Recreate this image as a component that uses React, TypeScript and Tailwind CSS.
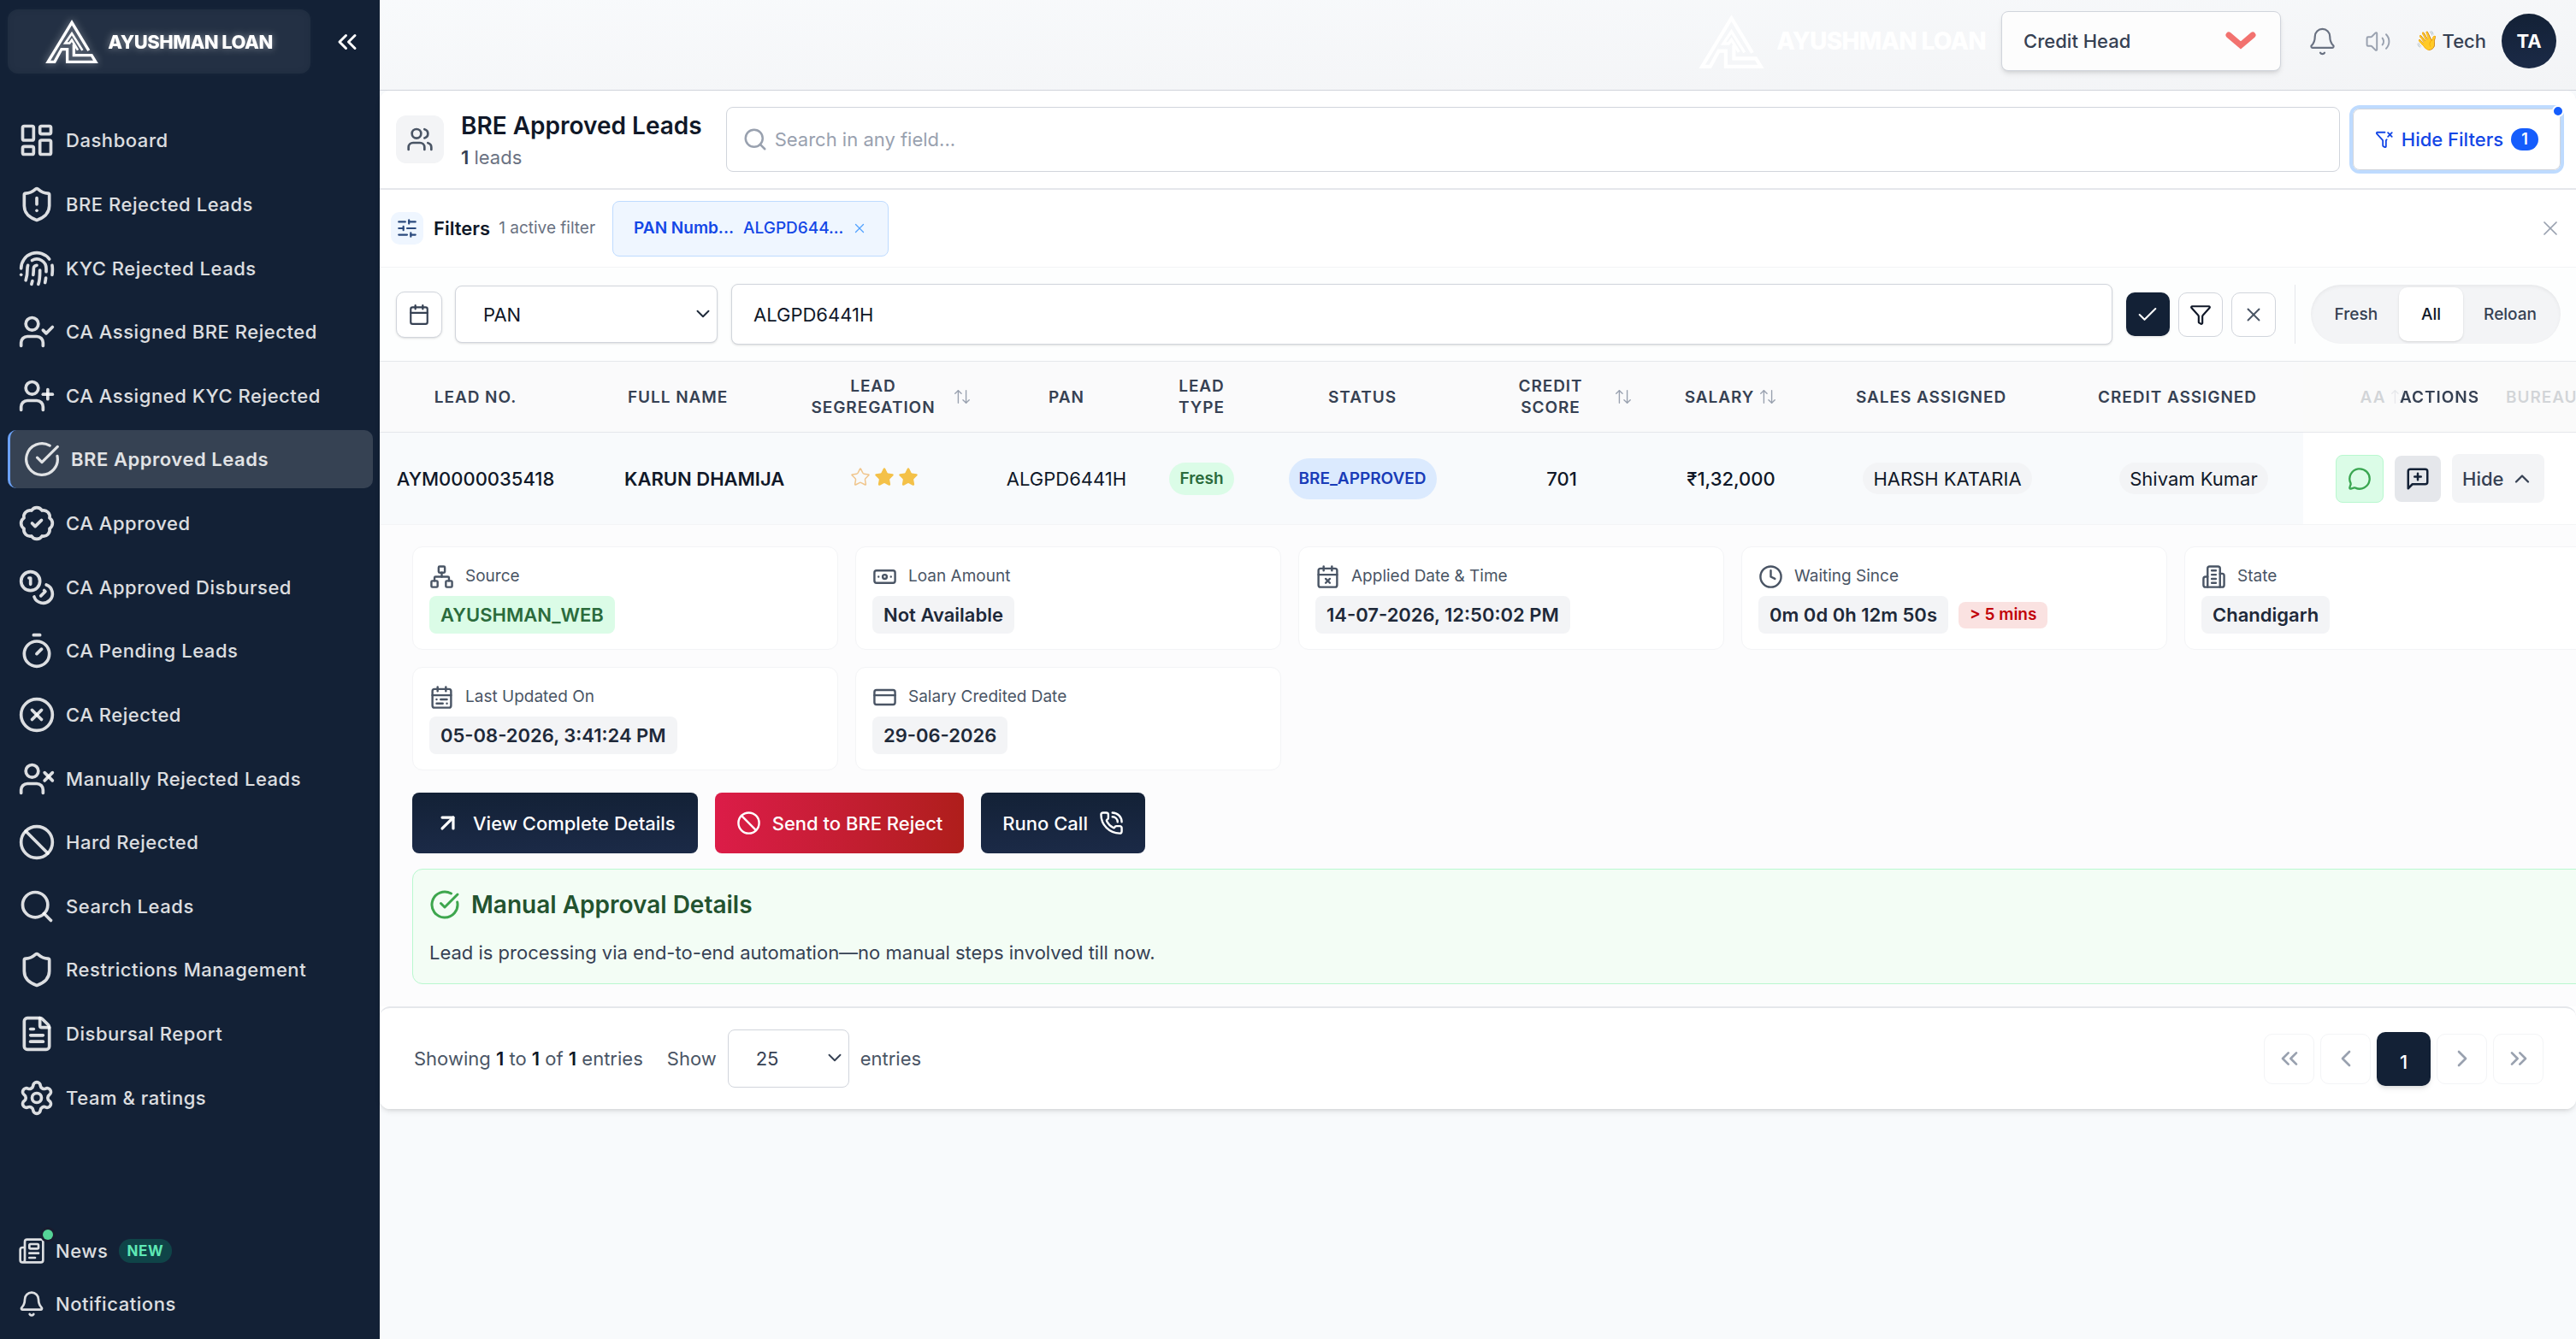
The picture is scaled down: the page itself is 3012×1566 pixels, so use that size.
import type { ComponentType, ReactNode } from "react";
import {
  ArrowUpDown,
  ArrowUpRight,
  BadgeCheck,
  Ban,
  Banknote,
  Bell,
  Calendar,
  CalendarRange,
  CalendarX,
  Check,
  ChevronDown,
  ChevronLeft,
  ChevronRight,
  ChevronUp,
  ChevronsLeft,
  ChevronsRight,
  CircleCheckBig,
  CircleX,
  Clock,
  Coins,
  CreditCard,
  FileText,
  Fingerprint,
  Funnel,
  FunnelX,
  LayoutDashboard,
  MessageCircle,
  Network,
  Newspaper,
  PhoneCall,
  Search,
  Settings,
  Shield,
  ShieldAlert,
  SlidersHorizontal,
  Star,
  Timer,
  UserCheck,
  UserPlus,
  UserX,
  Users,
  Volume2,
  X,
} from "lucide-react";

type IconProps = { size?: number; strokeWidth?: number; className?: string };
type IconType = ComponentType<IconProps>;

const NAV_ITEMS: { label: string; icon: IconType; active?: boolean }[] = [
  { label: "Dashboard", icon: LayoutDashboard },
  { label: "BRE Rejected Leads", icon: ShieldAlert },
  { label: "KYC Rejected Leads", icon: Fingerprint },
  { label: "CA Assigned BRE Rejected", icon: UserCheck },
  { label: "CA Assigned KYC Rejected", icon: UserPlus },
  { label: "BRE Approved Leads", icon: CircleCheckBig, active: true },
  { label: "CA Approved", icon: BadgeCheck },
  { label: "CA Approved Disbursed", icon: Coins },
  { label: "CA Pending Leads", icon: Timer },
  { label: "CA Rejected", icon: CircleX },
  { label: "Manually Rejected Leads", icon: UserX },
  { label: "Hard Rejected", icon: Ban },
  { label: "Search Leads", icon: Search },
  { label: "Restrictions Management", icon: Shield },
  { label: "Disbursal Report", icon: FileText },
  { label: "Team & ratings", icon: Settings },
];

function LogoMark({ className }: { className?: string }) {
  return (
    <svg viewBox="0 0 184 152" className={className} fill="none" stroke="currentColor" strokeWidth="10" aria-hidden>
      <path d="M151 108 92 10 9 147H32L56 103H76V147H175L161 124H99V86" />
      <path d="M129 107 92 48 69 82H84L92 71 113 106" strokeWidth="8" />
    </svg>
  );
}

function BuildingIcon({ size = 24, strokeWidth = 2 }: IconProps) {
  return (
    <svg
      viewBox="0 0 24 24"
      width={size}
      height={size}
      fill="none"
      stroke="currentColor"
      strokeWidth={strokeWidth}
      strokeLinecap="round"
      strokeLinejoin="round"
      aria-hidden
    >
      <path d="M6 22V4a2 2 0 0 1 2-2h8a2 2 0 0 1 2 2v18Z" />
      <path d="M6 12H4a2 2 0 0 0-2 2v6a2 2 0 0 0 2 2h2" />
      <path d="M18 9h2a2 2 0 0 1 2 2v9a2 2 0 0 1-2 2h-2" />
      <path d="M10 6h4M10 10h4M10 14h4M10 18h4" />
    </svg>
  );
}

function RemarkIcon() {
  return (
    <svg
      viewBox="0 0 24 24"
      width={30}
      height={30}
      fill="none"
      stroke="currentColor"
      strokeWidth={2}
      strokeLinecap="round"
      strokeLinejoin="round"
      aria-hidden
    >
      <path d="M21 15a2 2 0 0 1-2 2H7l-4 4V5a2 2 0 0 1 2-2h14a2 2 0 0 1 2 2z" />
      <path d="M12 7v6M9 10h6" />
    </svg>
  );
}

function Sidebar() {
  return (
    <aside className="flex h-screen w-[444px] shrink-0 flex-col bg-[#132136] text-[22px] font-medium tracking-wide text-white/85">
      <div className="flex items-center justify-between pt-[11px] pr-5 pl-[9px]">
        <div className="flex h-[75px] w-[354px] items-center justify-center gap-[11px] rounded-xl bg-white/5 text-white drop-shadow-[0_0_4px_rgba(255,255,255,0.45)]">
          <LogoMark className="h-[51px] w-[62px]" />
          <span className="text-[22px] leading-none font-extrabold tracking-tight">AYUSHMAN LOAN</span>
        </div>
        <button aria-label="Collapse menu" className="text-white">
          <ChevronsLeft size={36} />
        </button>
      </div>

      <nav className="mt-[41px] grid flex-1 auto-rows-fr px-[9px]">
        {NAV_ITEMS.map(({ label, icon: Icon, active }) => (
          <a
            key={label}
            href="#"
            className={
              active
                ? "mr-[-1px] flex h-[68px] items-center gap-3 self-center rounded-[10px] border-l-[3px] border-[#6ba1f5] bg-white/15 pl-[15px] font-semibold"
                : "flex h-[68px] items-center gap-3 self-center pl-3"
            }
          >
            <Icon size={44} strokeWidth={active ? 1.75 : 2} />
            {label}
          </a>
        ))}
      </nav>

      <div className="mt-[111px] flex flex-col pb-[10px] pl-[21px]">
        <a href="#" className="flex h-[62px] items-center gap-3">
          <span className="relative">
            <Newspaper size={32} />
            <span className="absolute -top-[9px] -right-[9px] size-3 rounded-full bg-[#55d396] ring-3 ring-[#191d30]" />
          </span>
          News
          <span className="flex h-7 items-center rounded-full bg-emerald-400/20 px-[10px] text-[17px] font-bold text-emerald-300">
            NEW
          </span>
        </a>
        <a href="#" className="flex h-[62px] items-center gap-3">
          <Bell size={32} />
          Notifications
        </a>
      </div>
    </aside>
  );
}

function TopBar() {
  return (
    <header className="flex h-[106px] items-center justify-end border-b border-gray-300 bg-linear-to-br from-slate-50 to-gray-100 pr-[23px] pb-[9px]">
      <div className="mr-[18px] flex items-center gap-[14px] text-white">
        <LogoMark className="h-[63px] w-[77px]" />
        <span className="text-[28px] leading-none font-extrabold tracking-tight">AYUSHMAN LOAN</span>
      </div>
      <div className="relative">
        <select
          aria-label="Role"
          className="h-[70px] w-[327px] appearance-none rounded-lg border border-gray-300 bg-[#fdfdfd] pl-[25px] font-medium text-gray-700 shadow-md"
        >
          <option>Credit Head</option>
        </select>
        <svg
          viewBox="0 0 36 22"
          className="pointer-events-none absolute top-6 right-[29px] h-[22px] w-9"
          fill="none"
          stroke="#f2726f"
          strokeWidth="7"
          strokeLinecap="round"
        >
          <path d="M4 4 18 16 32 4" />
        </svg>
      </div>
      <button aria-label="Notifications" className="ml-[31px] text-gray-500">
        <Bell size={35} strokeWidth={1.5} />
      </button>
      <button aria-label="Sound" className="ml-8 text-gray-400">
        <Volume2 size={31} strokeWidth={1.5} />
      </button>
      <span className="ml-7 flex items-center gap-1 font-medium text-gray-700">
        <span className="font-['Noto_Color_Emoji']">👋</span>
        Tech
      </span>
      <span className="ml-[18px] flex size-16 items-center justify-center rounded-full bg-linear-to-b from-[#132136] to-[#1b2a47] font-bold text-white">
        TA
      </span>
    </header>
  );
}

function TitleRow() {
  return (
    <div className="flex h-[116px] items-center border-b-2 border-gray-200 pr-[18px] pl-[19px]">
      <div className="flex size-14 items-center justify-center rounded-xl bg-gray-100 text-gray-600">
        <Users size={32} />
      </div>
      <div className="ml-5 pt-1 whitespace-nowrap">
        <h1 className="text-[28px] leading-[38px] font-semibold text-gray-900">BRE Approved Leads</h1>
        <p className="leading-9 text-gray-500">
          <span className="font-semibold text-gray-700">1</span> leads
        </p>
      </div>
      <label className="ml-7 flex h-[76px] flex-1 items-center gap-2 rounded-lg border border-gray-300 pl-[18px] text-gray-400">
        <Search size={30} />
        <input
          aria-label="Search in any field"
          placeholder="Search in any field..."
          className="flex-1 outline-none placeholder:text-gray-400"
        />
      </label>
      <button className="relative ml-[15px] flex h-[72px] items-center gap-[9px] rounded-lg border border-gray-300 px-[25px] font-medium text-blue-700 ring-4 ring-blue-200">
        <FunnelX size={22} />
        Hide Filters
        <span className="flex h-[26px] w-8 items-center justify-center rounded-full bg-blue-600 text-lg font-semibold text-white">
          1
        </span>
        <span className="absolute -top-[5px] -right-[5px] size-[14px] rounded-full border-2 border-white bg-blue-600" />
      </button>
    </div>
  );
}

function ActiveFilters() {
  return (
    <div className="flex h-[91px] items-center border-b border-gray-100 pr-4 pl-[13px]">
      <span className="flex size-[38px] items-center justify-center rounded-[10px] bg-blue-50 text-[#2b4a7d]">
        <SlidersHorizontal size={26} />
      </span>
      <h2 className="ml-3 font-semibold text-gray-900">Filters</h2>
      <span className="ml-[10px] text-[19px] text-gray-500">1 active filter</span>
      <span className="ml-5 flex h-[65px] items-center rounded-lg border border-blue-200 bg-blue-50 px-6 text-[19px] text-blue-700">
        <span className="font-semibold">PAN Numb...</span>
        <span className="ml-[11px] font-medium">ALGPD644...</span>
        <button aria-label="Remove filter" className="ml-[10px] text-blue-400">
          <X size={18} strokeWidth={1.75} />
        </button>
      </span>
      <button aria-label="Close filters" className="ml-auto text-gray-400">
        <X size={28} strokeWidth={1.5} />
      </button>
    </div>
  );
}

function FilterControls() {
  return (
    <div className="flex h-[109px] items-center bg-[#fdfefe] pr-[18px] pl-[19px]">
      <button
        aria-label="Pick dates"
        className="flex size-[54px] items-center justify-center rounded-[10px] border border-gray-300 bg-white text-gray-700 shadow-sm"
      >
        <Calendar size={26} />
      </button>
      <div className="relative ml-[15px]">
        <select
          aria-label="Filter field"
          className="h-[67px] w-[307px] appearance-none rounded-lg border border-gray-300 bg-white pl-8 text-gray-900 shadow-sm"
        >
          <option>PAN</option>
        </select>
        <ChevronDown size={26} strokeWidth={1.75} className="pointer-events-none absolute top-5 right-1 text-gray-800" />
      </div>
      <input
        aria-label="Filter value"
        defaultValue="ALGPD6441H"
        className="ml-4 h-[71px] flex-1 rounded-lg border border-gray-300 bg-white px-[25px] text-gray-900 shadow"
      />
      <div className="ml-4 flex items-center gap-[10px]">
        <button aria-label="Apply" className="flex size-[51px] items-center justify-center rounded-[10px] bg-[#132136] text-white shadow-sm">
          <Check size={28} strokeWidth={1.75} />
        </button>
        <button aria-label="Filter" className="flex size-[52px] items-center justify-center rounded-[10px] border border-gray-300 bg-white text-gray-900">
          <Funnel size={26} />
        </button>
        <button aria-label="Clear" className="flex size-[52px] items-center justify-center rounded-[10px] border border-gray-300 bg-white text-gray-600">
          <X size={26} strokeWidth={1.75} />
        </button>
      </div>
      <span className="ml-[22px] h-[69px] w-px bg-gray-200" />
      <div className="ml-[18px] flex h-[69px] items-center rounded-full bg-gray-100 text-[19px] font-medium text-gray-700 inset-shadow-sm">
        <button className="pr-[25px] pl-7">Fresh</button>
        <button className="h-[63px] rounded-[10px] bg-white px-[26px] text-gray-900 shadow">All</button>
        <button className="pr-7 pl-6">Reloan</button>
      </div>
    </div>
  );
}

function SortIcon() {
  return <ArrowUpDown size={22} strokeWidth={1.5} className="shrink-0 text-gray-400" />;
}

const COLUMN_WIDTHS = [224, 260, 212, 214, 102, 274, 192, 204, 302, 274, 172, 214, 319];

function LeadsTable() {
  return (
    <div className="overflow-x-auto [scrollbar-width:none]">
      <table className="w-[2963px] table-fixed border-separate border-spacing-0 whitespace-nowrap">
        <colgroup>
          {COLUMN_WIDTHS.map((width, i) => (
            <col key={i} style={{ width }} />
          ))}
        </colgroup>
        <thead className="bg-[#fafafb] text-[19px] leading-[25px] tracking-wider text-gray-700 [&_th]:border-y [&_th]:border-gray-200 [&_th]:font-semibold">
          <tr className="h-[84px]">
            <th>LEAD NO.</th>
            <th className="pl-[66px] text-left">FULL NAME</th>
            <th>
              <div className="flex items-center justify-center gap-5 pl-4">
                <span>
                  LEAD
                  <br />
                  SEGREGATION
                </span>
                <SortIcon />
              </div>
            </th>
            <th>PAN</th>
            <th>
              LEAD
              <br />
              TYPE
            </th>
            <th>STATUS</th>
            <th>
              <div className="flex items-center justify-center gap-9 pl-8">
                <span>
                  CREDIT
                  <br />
                  SCORE
                </span>
                <SortIcon />
              </div>
            </th>
            <th>
              <div className="flex items-center justify-center gap-[5px]">
                SALARY
                <SortIcon />
              </div>
            </th>
            <th className="pr-[38px]">SALES ASSIGNED</th>
            <th className="pr-[38px]">CREDIT ASSIGNED</th>
            <th>
              <div className="flex items-center justify-center gap-[5px]">
                AA
                <SortIcon />
              </div>
            </th>
            <th className="pl-14 text-left">BUREAU</th>
            <th className="sticky right-0 bg-[#fafafa]/80">ACTIONS</th>
          </tr>
        </thead>
        <tbody>
          <tr className="h-[108px] bg-slate-50 text-center text-gray-900 [&>td]:border-b [&>td]:border-gray-100">
            <td className="font-medium">AYM0000035418</td>
            <td className="pl-[62px] text-left font-semibold">KARUN DHAMIJA</td>
            <td>
              <div className="flex justify-center gap-1 pb-1">
                <Star size={24} strokeWidth={1.5} className="text-[#f0c58c]" />
                <Star size={24} strokeWidth={1.5} className="fill-[#f4c148] text-[#f4c148]" />
                <Star size={24} strokeWidth={1.5} className="fill-[#f4c148] text-[#f4c148]" />
              </div>
            </td>
            <td>ALGPD6441H</td>
            <td>
              <span className="inline-flex h-[38px] items-center rounded-full bg-green-100 px-3 text-[19px] font-semibold text-[#2b6b3c]">
                Fresh
              </span>
            </td>
            <td>
              <span className="inline-flex h-12 items-center rounded-full bg-blue-100 px-3 text-[19px] font-semibold text-blue-800">
                BRE_APPROVED
              </span>
            </td>
            <td className="font-medium">701</td>
            <td className="font-medium">₹1,32,000</td>
            <td>
              <span className="inline-flex h-[37px] items-center rounded-full bg-gray-100 px-3">HARSH KATARIA</span>
            </td>
            <td>
              <span className="inline-flex h-[37px] items-center rounded-full bg-gray-100 px-3">Shivam Kumar</span>
            </td>
            <td />
            <td />
            <td className="sticky right-0 bg-white">
              <div className="flex items-center gap-[13px] pl-[38px]">
                <button aria-label="WhatsApp" className="flex size-14 items-center justify-center rounded-lg border border-green-200 bg-green-100 text-[#3aa651]">
                  <MessageCircle size={28} />
                </button>
                <button aria-label="Add remark" className="flex size-[54px] items-center justify-center rounded-lg bg-gray-200 text-[#132136]">
                  <RemarkIcon />
                </button>
                <button className="flex h-[57px] items-center gap-2 rounded-lg bg-gray-100 px-3 font-medium text-gray-700">
                  Hide
                  <ChevronUp size={28} />
                </button>
              </div>
            </td>
          </tr>
          <tr>
            <td colSpan={13} className="bg-[#fcfcfd] pt-[25px] pb-[26px] pl-[38px]">
              <LeadDetails />
            </td>
          </tr>
        </tbody>
      </table>
    </div>
  );
}

function DetailCard({
  icon: Icon,
  label,
  value,
  tone = "bg-gray-100 text-gray-800",
  children,
}: {
  icon: IconType;
  label: string;
  value: string;
  tone?: string;
  children?: ReactNode;
}) {
  return (
    <div className="h-[121px] rounded-xl border border-gray-100 bg-white px-[19px] pt-[18px]">
      <div className="flex h-8 items-center gap-[13px] text-[19px] text-gray-600">
        <Icon size={29} />
        {label}
      </div>
      <div className="mt-[7px] flex items-center gap-3">
        <span className={`flex h-11 items-center rounded-lg px-[13px] font-semibold ${tone}`}>{value}</span>
        {children}
      </div>
    </div>
  );
}

function LeadDetails() {
  return (
    <>
      <div className="grid grid-cols-[repeat(5,498px)] gap-5">
        <DetailCard icon={Network} label="Source" value="AYUSHMAN_WEB" tone="bg-green-100 text-[#2b6b3c]" />
        <DetailCard icon={Banknote} label="Loan Amount" value="Not Available" />
        <DetailCard icon={CalendarX} label="Applied Date & Time" value="14-07-2026, 12:50:02 PM" />
        <DetailCard icon={Clock} label="Waiting Since" value="0m 0d 0h 12m 50s">
          <span className="flex h-[31px] items-center rounded-lg bg-[#fae2e1] px-[13px] text-[19px] font-semibold text-red-700">
            &gt; 5 mins
          </span>
        </DetailCard>
        <DetailCard icon={BuildingIcon} label="State" value="Chandigarh" />
        <DetailCard icon={CalendarRange} label="Last Updated On" value="05-08-2026, 3:41:24 PM" />
        <DetailCard icon={CreditCard} label="Salary Credited Date" value="29-06-2026" />
      </div>

      <div className="mt-[26px] flex gap-5 font-medium text-white">
        <button className="flex h-[71px] items-center gap-[14px] rounded-lg bg-linear-to-b from-[#132136] to-[#1b2a47] px-[26px]">
          <ArrowUpRight size={31} strokeWidth={2.5} />
          View Complete Details
        </button>
        <button className="flex h-[71px] items-center gap-[13px] rounded-lg bg-linear-to-r from-[#dc1c48] to-[#af1e1b] px-[25px]">
          <Ban size={29} />
          Send to BRE Reject
        </button>
        <button className="flex h-[71px] items-center gap-[13px] rounded-lg bg-linear-to-b from-[#132136] to-[#1b2a47] px-[25px]">
          Runo Call
          <PhoneCall size={29} />
        </button>
      </div>

      <section className="mt-[18px] h-[135px] rounded-xl border border-green-200 bg-[#f3fdf5] px-[19px] pt-5">
        <h3 className="flex items-center gap-[13px] text-[28px] leading-[42px] font-semibold text-[#23532f]">
          <CircleCheckBig size={36} className="text-[#3da64d]" />
          Manual Approval Details
        </h3>
        <p className="mt-[17px] leading-9 text-gray-700">
          Lead is processing via end-to-end automation—no manual steps involved till now.
        </p>
      </section>
    </>
  );
}

function PageButton({ label, children }: { label: string; children: ReactNode }) {
  return (
    <button aria-label={label} className="flex size-[59px] items-center justify-center rounded-[10px] border border-gray-100 text-gray-400">
      {children}
    </button>
  );
}

function Pagination() {
  return (
    <footer className="flex h-[120px] items-center rounded-xl border-t-2 border-gray-200 bg-white pr-[38px] pl-10 text-gray-600">
      <p>
        Showing <b className="font-semibold text-gray-900">1</b> to <b className="font-semibold text-gray-900">1</b> of{" "}
        <b className="font-semibold text-gray-900">1</b> entries
      </p>
      <label htmlFor="page-size" className="ml-7">
        Show
      </label>
      <div className="relative mx-[13px]">
        <select
          id="page-size"
          className="h-[68px] w-[142px] appearance-none rounded-lg border border-gray-300 bg-white pl-8 text-gray-700"
        >
          <option>25</option>
        </select>
        <ChevronDown size={26} strokeWidth={1.75} className="pointer-events-none absolute top-5 right-1 text-gray-700" />
      </div>
      entries
      <div className="ml-auto flex items-center gap-[7px]">
        <PageButton label="First page">
          <ChevronsLeft size={32} />
        </PageButton>
        <PageButton label="Previous page">
          <ChevronLeft size={32} />
        </PageButton>
        <button className="size-[63px] rounded-[10px] bg-[#132136] pt-2 font-medium text-white shadow-md">1</button>
        <PageButton label="Next page">
          <ChevronRight size={32} />
        </PageButton>
        <PageButton label="Last page">
          <ChevronsRight size={32} />
        </PageButton>
      </div>
    </footer>
  );
}

export default function App() {
  return (
    <div className="flex min-h-screen bg-[#f8fafc] font-[Inter,'Noto_Sans',sans-serif] text-[22px] leading-8">
      <Sidebar />
      <main className="min-w-0 flex-1">
        <TopBar />
        <div className="rounded-xl bg-white shadow-md">
          <TitleRow />
          <ActiveFilters />
          <FilterControls />
          <LeadsTable />
          <Pagination />
        </div>
      </main>
    </div>
  );
}
